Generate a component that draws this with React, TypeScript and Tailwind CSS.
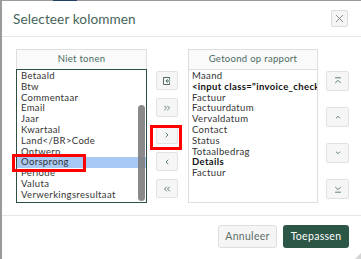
import React from "react";

const HIDDEN = [
  "Betaald",
  "Btw",
  "Commentaar",
  "Email",
  "Jaar",
  "Kwartaal",
  "Land</BR>Code",
  "Ontwerp",
  "Oorsprong",
  "Periode",
  "Valuta",
  "Verwerkingsresultaat",
];

const SHOWN: Array<{ label: string; bold?: boolean }> = [
  { label: "Maand" },
  { label: '<input class="invoice_check', bold: true },
  { label: "Factuur" },
  { label: "Factuurdatum" },
  { label: "Vervaldatum" },
  { label: "Contact" },
  { label: "Status" },
  { label: "Totaalbedrag" },
  { label: "Details", bold: true },
  { label: "Factuur" },
];

const FONT = { fontFamily: "Lato, 'Open Sans', sans-serif" };

function Icon({ d, box = true }: { d: string; box?: boolean }) {
  return (
    <svg width="10" height="10" viewBox="0 0 10 10" fill="none" stroke="#4f6f63" strokeWidth={box ? 1 : 0.9} strokeLinecap="round" strokeLinejoin="round">
      <path d={d} />
    </svg>
  );
}

function SmallBtn({ children, h = "h-[19px]", w = "w-[22px]" }: { children: React.ReactNode; h?: string; w?: string }) {
  return (
    <button className={`${w} ${h} flex items-center justify-center rounded-[2px] border border-[#e2e2e2] bg-[#f6f6f6]`}>
      {children}
    </button>
  );
}

function ListHeader({ title }: { title: string }) {
  return (
    <div className="h-[20px] flex items-center justify-center border border-b-0 border-[#dedede] bg-[#fafafa] text-[9.5px] tracking-[0.3px] text-[#4a6b5f]">
      {title}
    </div>
  );
}

export default function App() {
  return (
    <div className="relative w-[361px] h-[259px] overflow-hidden bg-white flex flex-col" style={FONT}>
      {/* page behind the dialog */}
      <div className="h-px flex shrink-0">
        <div className="w-[53px] bg-[#9a9a9a]" />
        <div className="w-[24px] bg-[#23406b]" />
        <div className="flex-1 bg-[#9a9a9a]" />
      </div>

      <div className="flex-1 flex">
        <div className="w-[2px] bg-[#9a9a9a]" />
        <div className="flex-1 flex flex-col">
          {/* header */}
          <div className="h-[36px] flex items-start justify-between border-b border-[#e6e6e6] pl-[11px] pr-[13px]">
            <h1 className="mt-[10px] text-[13.6px] leading-[17px] tracking-[0.1px] text-[#46655a]">Selecteer kolommen</h1>
            <button className="mt-[9px] w-[17px] h-[17px] flex items-center justify-center rounded-[2px] border border-[#dcdcdc] bg-[#f5f5f5]">
              <svg width="9" height="9" viewBox="0 0 9 9" stroke="#8a8a8a" strokeWidth={1}>
                <path d="M1 1l7 7M8 1l-7 7" />
              </svg>
            </button>
          </div>

          {/* body */}
          <div className="h-[178px] flex items-start pt-[12px] pl-[14px]">
            {/* Niet tonen */}
            <div className="w-[131px] flex flex-col">
              <ListHeader title="Niet tonen" />
              <div className="relative h-[134px] border border-[#2f4f44] overflow-hidden pt-px text-[9.5px] leading-[10.8px] tracking-[0.35px] text-[#333]">
                {HIDDEN.map((item) => (
                  <div key={item} className={`pl-[4px] pr-[9px] whitespace-nowrap ${item === "Oorsprong" ? "bg-[#a8c9f4]" : ""}`}>
                    {item}
                  </div>
                ))}
                <div className="absolute right-[1px] top-[35px] w-[7px] h-[96px] rounded-full bg-[#7d7d7d]/90" />
              </div>
            </div>

            {/* move buttons */}
            <div className="ml-[9px] mt-[22px] flex flex-col gap-[8px]">
              <SmallBtn>
                <Icon d="M7.5 3.2V1.5h-6v7h6V6.8M7.8 5H4.2M5.4 3.6L4 5l1.4 1.4" />
              </SmallBtn>
              <SmallBtn>
                <Icon box={false} d="M2.5 3l2 2-2 2M5.5 3l2 2-2 2" />
              </SmallBtn>
              <SmallBtn>
                <Icon box={false} d="M4 3l2 2-2 2" />
              </SmallBtn>
              <SmallBtn>
                <Icon box={false} d="M6 3L4 5l2 2" />
              </SmallBtn>
              <SmallBtn>
                <Icon box={false} d="M4.5 3L2.5 5l2 2M7.5 3l-2 2 2 2" />
              </SmallBtn>
            </div>

            {/* Getoond op rapport */}
            <div className="ml-[10px] w-[130px] flex flex-col">
              <ListHeader title="Getoond op rapport" />
              <div className="h-[134px] border border-[#dedede] overflow-hidden pt-px text-[9.5px] leading-[10.8px] tracking-[0.35px] text-[#333]">
                {SHOWN.map((item, i) => (
                  <div key={i} className={`pl-[3px] whitespace-nowrap ${item.bold ? "font-bold text-[#111]" : ""}`}>
                    {item.label}
                  </div>
                ))}
              </div>
            </div>

            {/* order buttons */}
            <div className="ml-[8px] mt-[22px] flex flex-col gap-[16px]">
              <SmallBtn h="h-[20px]" w="w-[23px]">
                <Icon box={false} d="M2.5 1.8h5M2.5 6.8L5 4.3l2.5 2.5" />
              </SmallBtn>
              <SmallBtn h="h-[20px]" w="w-[23px]">
                <Icon box={false} d="M3.3 6L5 4.3 6.7 6" />
              </SmallBtn>
              <SmallBtn h="h-[20px]" w="w-[23px]">
                <Icon box={false} d="M3.3 4L5 5.7 6.7 4" />
              </SmallBtn>
              <SmallBtn h="h-[20px]" w="w-[23px]">
                <Icon box={false} d="M2.5 3.2L5 5.7l2.5-2.5M2.5 8.2h5" />
              </SmallBtn>
            </div>
          </div>

          {/* footer */}
          <div className="flex-1 border-t border-[#e6e6e6] flex items-start justify-end gap-[6px] pt-[9px] pr-[12px]">
            <button className="w-[59px] h-[23px] rounded-[3px] border border-[#dedede] bg-[#f5f5f5] text-[10.5px] tracking-[0.3px] text-[#5d6f68]">
              Annuleer
            </button>
            <button className="w-[66px] h-[23px] rounded-[3px] bg-[#2c5646] text-[10.5px] tracking-[0.3px] text-white">
              Toepassen
            </button>
          </div>
        </div>
      </div>

      {/* resize grip */}
      <svg className="absolute right-0 bottom-0" width="6" height="6" viewBox="0 0 6 6">
        <path d="M6 0L0 6h6z" fill="#d4d4d4" />
      </svg>

      {/* red annotation boxes */}
      <div className="absolute left-[12px] top-[154px] w-[74px] h-[18px] border-[3.5px] border-[#ff0000]" />
      <div className="absolute left-[150px] top-[125px] w-[32px] h-[25px] border-[3.5px] border-[#ff0000]" />
    </div>
  );
}
